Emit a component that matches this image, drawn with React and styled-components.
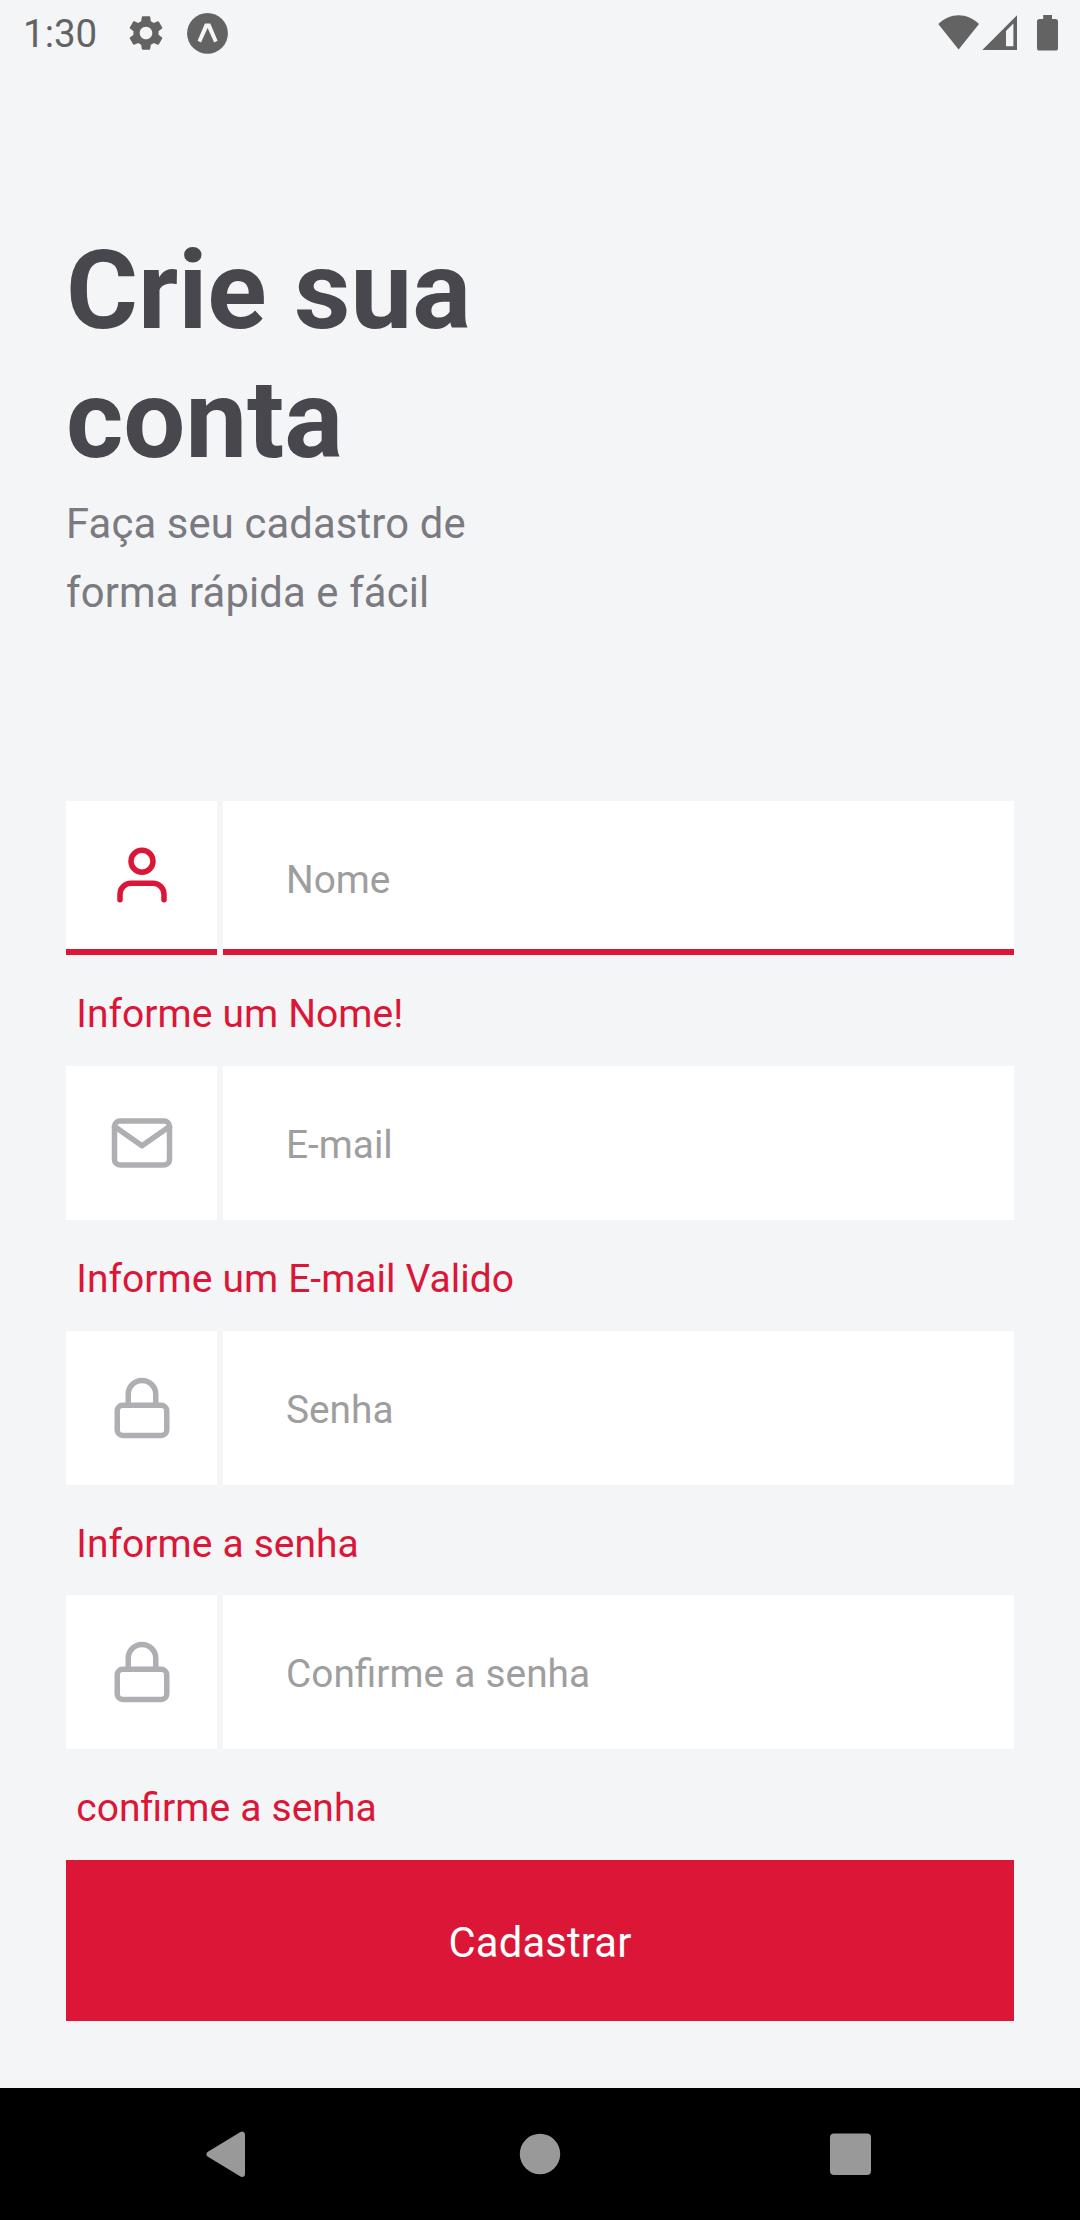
import React from 'react';
import styled, { createGlobalStyle } from 'styled-components';
import { FiUser, FiMail, FiLock } from 'react-icons/fi';
import { MdSettings } from 'react-icons/md';

const GlobalStyle = createGlobalStyle`
  *, *::before, *::after { box-sizing: border-box; }
  body { margin: 0; background: #f4f5f7; font-family: Roboto, 'Noto Sans', sans-serif; }
`;

const Screen = styled.div`
  display: flex;
  flex-direction: column;
  width: 1080px;
  height: 2220px;
  overflow: hidden;
  background: #f4f5f7;
`;

const StatusBar = styled.header`
  display: flex;
  justify-content: space-between;
  height: 66px;
  padding: 0 22px 0 23px;
  color: #636363;
`;

const StatusGroup = styled.div`
  display: flex;
  align-items: center;
`;

const Clock = styled.time`
  width: 102px;
  font-size: 38.5px;
  line-height: 69px;
`;

const SettingsIcon = styled(MdSettings)`
  width: 42px;
  height: 42px;
  margin-right: 20px;
`;

const Content = styled.main`
  display: flex;
  flex: 1;
  flex-direction: column;
  padding: 160px 66px 0;
`;

const Heading = styled.section`
  height: 575px;
`;

const Title = styled.h1`
  margin: 0;
  color: #47474d;
  font-size: 110px;
  font-weight: 700;
  line-height: 129px;
`;

const Subtitle = styled.p`
  margin: 6px 0 0;
  color: #7a7a80;
  font-size: 41.75px;
  letter-spacing: 0.15px;
  line-height: 68.75px;
`;

const Form = styled.form`
  display: flex;
  flex-direction: column;
`;

const Row = styled.div`
  display: flex;
  gap: 6px;
  height: 154px;
`;

const cellBorder = ({ $active }) => ($active ? '6px solid #dc1637' : '0');

const IconCell = styled.div`
  display: flex;
  flex: none;
  align-items: center;
  justify-content: center;
  width: 151px;
  border-bottom: ${cellBorder};
  background: #fff;
  color: ${({ $active }) => ($active ? '#dc1637' : '#aeaeb3')};

  svg { width: 66px; height: 66px; }
`;

const Input = styled.input`
  flex: 1;
  min-width: 0;
  padding: ${({ $active }) => ($active ? '9px 63px 0' : '3px 63px 0')};
  border: 0;
  border-bottom: ${cellBorder};
  border-radius: 0;
  outline: 0;
  background: #fff;
  color: #47474d;
  font: 400 38.8px Roboto, 'Noto Sans', sans-serif;
  word-spacing: 0.6px;

  &::placeholder { color: #9e9e9e; opacity: 1; }
`;

const ErrorText = styled.p`
  height: 110.8px;
  margin: 0;
  padding: 37px 0 0 10.3px;
  color: #dc1637;
  font-size: 39px;
  line-height: 45px;
  word-spacing: 0.4px;
`;

const SubmitButton = styled.button`
  height: 161px;
  padding: 4px 0 0;
  border: 0;
  background: #dc1637;
  color: #fff;
  font: 400 41.75px Roboto, 'Noto Sans', sans-serif;
  letter-spacing: 0.15px;
`;

const NavBar = styled.nav`
  display: flex;
  align-items: center;
  justify-content: space-between;
  height: 132px;
  padding: 0 209px 0 206px;
  background: #000;
  color: #999;
`;

const FIELDS = [
  { name: 'name', label: 'Nome', error: 'Informe um Nome!', Icon: FiUser, active: true },
  { name: 'email', label: 'E-mail', error: 'Informe um E-mail Valido', Icon: FiMail },
  { name: 'password', label: 'Senha', error: 'Informe a senha', Icon: FiLock },
  { name: 'confirm', label: 'Confirme a senha', error: 'confirme a senha', Icon: FiLock },
];

const ExpoIcon = () => (
  <svg width="41" height="66" viewBox="0 0 41 66">
    <circle cx="20.5" cy="33.4" r="20.4" fill="currentColor" />
    <path d="M10.6 40.8 17.9 23.4H23.3L30.6 40.8 27.2 42.6 20.6 28 14 42.6Z" fill="#f4f5f7" />
  </svg>
);

const SystemIcons = () => (
  <svg width="120" height="66" viewBox="938 0 120 66" fill="currentColor">
    <path d="M938.3 24C950 12.3 967.3 12.3 979 24L958.6 49.4Z" />
    <path fillRule="evenodd" d="M982.3 50 1017 15.3V50ZM1006 31V46.3H1013.4V23.6Z" />
    <path d="M1043.2 15H1052V19H1055.5Q1058 19 1058 21.5V48Q1058 50.6 1055.5 50.6H1039.5Q1037 50.6 1037 48V21.5Q1037 19 1039.5 19H1043.2Z" />
  </svg>
);

const BackIcon = () => (
  <svg width="44" height="48" viewBox="0 0 44 48">
    <path d="M3.5 24.3 36 4.6V44Z" fill="currentColor" stroke="currentColor" strokeWidth="6" strokeLinejoin="round" />
  </svg>
);

const HomeIcon = () => (
  <svg width="42" height="42" viewBox="0 0 42 42">
    <circle cx="21" cy="21" r="20.2" fill="currentColor" />
  </svg>
);

const RecentsIcon = () => (
  <svg width="41" height="42" viewBox="0 0 41 42">
    <rect width="41" height="41.3" y="0.6" rx="4" fill="currentColor" />
  </svg>
);

export default function App() {
  return (
    <>
      <GlobalStyle />
      <Screen>
        <StatusBar>
          <StatusGroup>
            <Clock>1:30</Clock>
            <SettingsIcon />
            <ExpoIcon />
          </StatusGroup>
          <SystemIcons />
        </StatusBar>
        <Content>
          <Heading>
            <Title>Crie sua<br />conta</Title>
            <Subtitle>Faça seu cadastro de<br />forma rápida e fácil</Subtitle>
          </Heading>
          <Form onSubmit={(event) => event.preventDefault()}>
            {FIELDS.map(({ name, label, error, Icon, active }) => (
              <React.Fragment key={name}>
                <Row>
                  <IconCell $active={active}><Icon /></IconCell>
                  <Input name={name} placeholder={label} $active={active} />
                </Row>
                <ErrorText>{error}</ErrorText>
              </React.Fragment>
            ))}
            <SubmitButton type="submit">Cadastrar</SubmitButton>
          </Form>
        </Content>
        <NavBar>
          <BackIcon />
          <HomeIcon />
          <RecentsIcon />
        </NavBar>
      </Screen>
    </>
  );
}
